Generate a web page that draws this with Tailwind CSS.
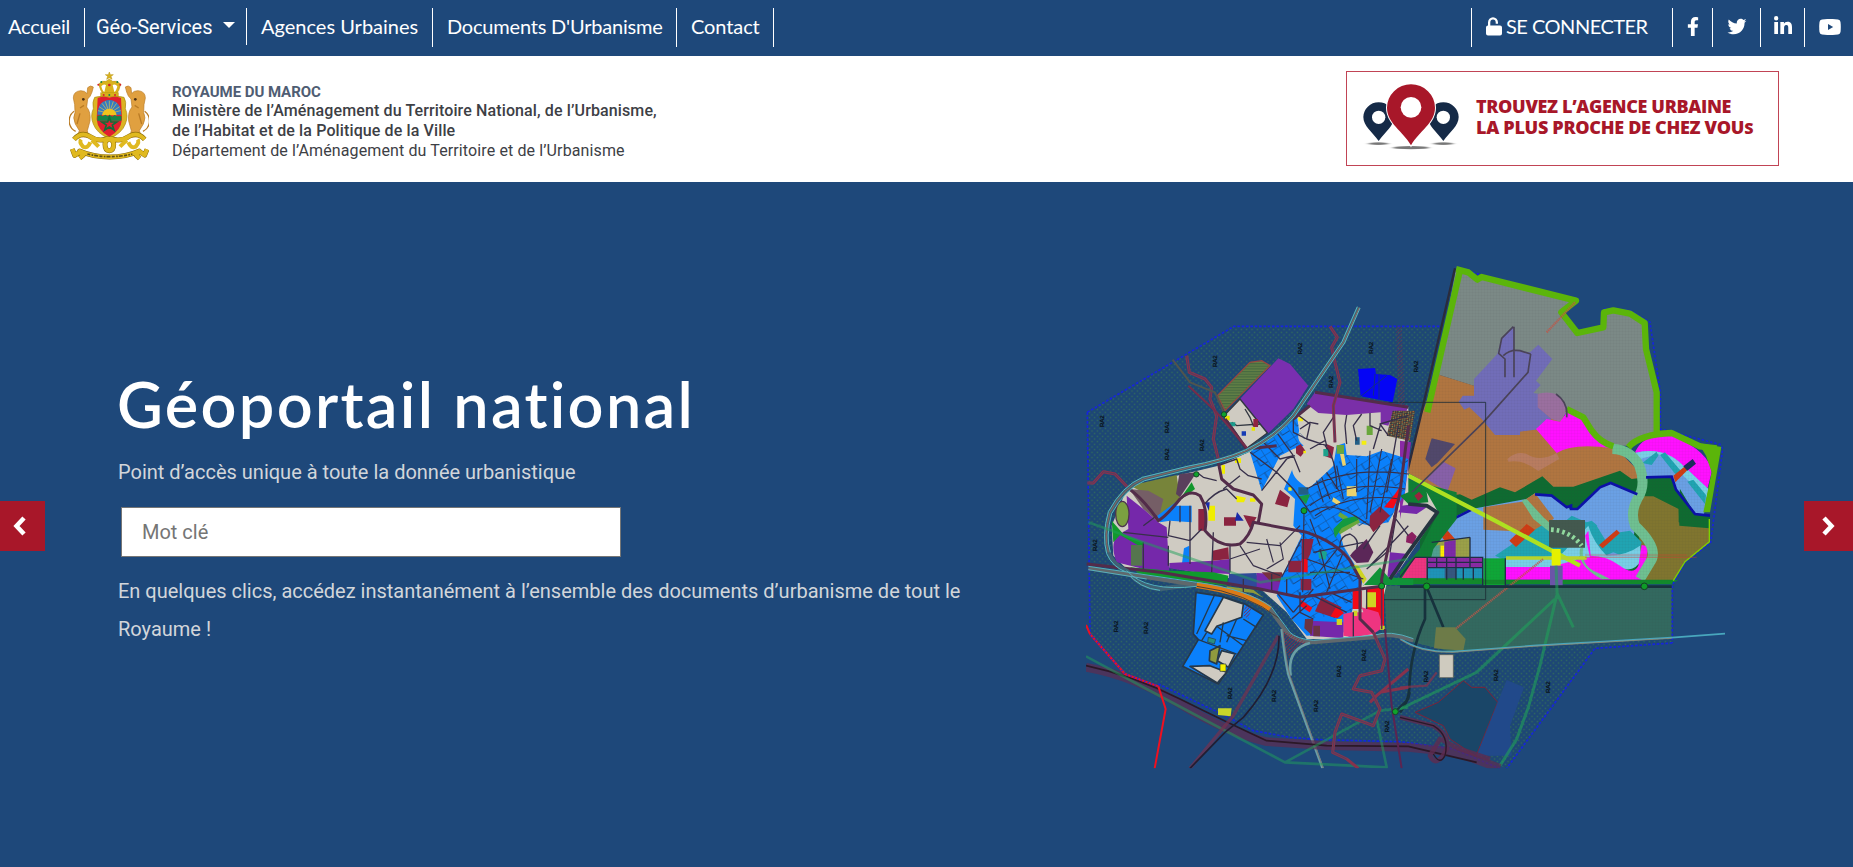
<!DOCTYPE html>
<html lang="fr">
<head>
<meta charset="utf-8">
<title>Géoportail national</title>
<script src="https://cdn.jsdelivr.net/npm/@tailwindcss/browser@4"></script>
</head>
<body class="w-[1853px] h-[867px] overflow-hidden bg-[#1e487a] font-['Roboto',sans-serif] flex flex-col">
<nav class="h-14 shrink-0 flex items-start justify-between pt-2 text-white text-[20px] font-['Lato',sans-serif] whitespace-nowrap">
  <div class="flex">
    <a class="w-[85px] h-[39px] pl-2 pt-1 leading-[29px] tracking-[-0.2px] border-r border-white">Accueil</a>
    <a class="w-[162px] h-[37px] pl-[11px] pt-1 leading-[30px] border-r border-white font-['Roboto',sans-serif] flex">Géo-Services<span class="ml-[10px] mt-[10px] w-0 h-0 border-x-[6px] border-x-transparent border-t-[6px] border-t-white"></span></a>
    <a class="w-[186px] h-[39px] pl-[14px] pt-1 leading-[29px] border-r border-white">Agences Urbaines</a>
    <a class="w-[244px] h-[39px] pl-[14px] pt-1 leading-[29px] tracking-[-0.2px] border-r border-white">Documents D'Urbanisme</a>
    <a class="w-[97px] h-[39px] pl-[14px] pt-1 leading-[29px] tracking-[-0.1px] border-r border-white">Contact</a>
  </div>
  <div class="flex">
    <a class="w-[202px] h-[39px] pl-[14px] border-x border-white flex items-start">
      <svg class="w-4 h-[19px] mt-[9px]" viewBox="0 0 16 19" fill="#fff"><path d="M2 8.500V5.500a5 5.300 0 0 1 10 0v1.300h-2.300V5.500a2.700 2.900 0 0 0-5.400 0v3h9.700a2 2 0 0 1 2 2v6a2 2 0 0 1-2 2H2a2 2 0 0 1-2-2v-6a2 2 0 0 1 2-2z"/></svg>
      <span class="ml-1 pt-1 leading-[29px] tracking-[-0.5px]">SE CONNECTER</span></a>
    <a class="w-10 h-[39px] border-r border-white pl-[14px] pt-[9px]"><svg class="w-3 h-[19px]" viewBox="0 0 320 512" fill="#fff" preserveAspectRatio="none"><path d="M279 288l14-93h-89v-60c0-25 12-50 52-50h41V7S261 0 225 0c-73 0-121 44-121 125v70H23v93h81v224h100V288z"/></svg></a>
    <a class="w-12 h-[39px] border-r border-white pl-[14px] pt-[9px]"><svg class="w-5 h-[19px]" viewBox="0 0 512 512" fill="#fff"><path d="M459 152c.3 4.500.3 9 .3 13.600 0 138.700-105.600 298.600-298.600 298.600-59.500 0-114.700-17.200-161.100-47.100 8.400 1 16.600 1.300 25.300 1.300 49.100 0 94.200-16.600 130.300-44.800-46.100-1-84.800-31.200-98.100-72.800 6.500 1 13 1.600 19.800 1.600 9.400 0 18.800-1.300 27.600-3.600-48.100-9.700-84.100-52-84.100-103v-1.300c14 7.800 30.200 12.700 47.400 13.300-28.300-18.800-46.800-51-46.800-87.400 0-19.500 5.200-37.400 14.300-53 51.700 63.700 129.300 105.300 216.400 109.800-1.600-7.800-2.600-15.900-2.600-24 0-57.800 46.800-104.900 104.900-104.900 30.200 0 57.500 12.700 76.700 33.100 23.700-4.500 46.500-13.300 66.600-25.300-7.800 24.400-24.400 44.800-46.100 57.800 21.100-2.300 41.600-8.100 60.400-16.200-14.300 20.800-32.200 39.300-52.600 54.300z"/></svg></a>
    <a class="w-11 h-[39px] border-r border-white pl-[13px] pt-[8px]"><svg class="w-[18px] h-[19px]" viewBox="0 0 448 470" fill="#fff"><path d="M100 448H7V149h93zM54 108A54 54 0 1 1 54 0a54 54 0 0 1 0 108zM448 448h-93V302c0-35-1-79-48-79-49 0-56 38-56 77v148h-93V149h89v41h1c13-24 43-48 88-48 94 0 112 62 112 142z"/></svg></a>
    <a class="w-12 h-[39px] pl-[14px] pt-[11px]"><svg class="w-[22px] h-[16px]" viewBox="0 0 22 16"><path fill="#fff" d="M3 .4Q11-.5 19 .4q2.200.4 2.500 2.600.6 5 0 10-.3 2.200-2.500 2.600-8 .9-16 0Q.8 15.200.5 13-.1 8 .5 3 .8.8 3 .4z"/><path fill="#1e487a" d="M9 5l5.200 3L9 11z"/></svg></a>
  </div>
</nav>

<header class="h-[126px] shrink-0 bg-white flex items-start justify-between pl-[69px] pr-[74px]">
  <div class="flex">
    <svg class="w-[80px] h-[92px] mt-[15px]" viewBox="27 33 240 276">
      <g fill="#d9b21c" stroke="#b8930f" stroke-width="1.500">
        <path d="M148 36l3 8h9l-7 5 3 9-8-5-8 5 3-9-7-5h9z"/>
        <path d="M116 72q5 22 15 31h37q10-9 14-31-12-12-24-8l-10-7-10 7q-12-4-22 8z"/>
        <path d="M122 98h53v13h-53z"/>
      </g>
      <path d="M124 79q6-8 14-4l-5 21q-6-3-9-17zm48 0q-6-8-14-4l5 21q6-3 9-17z" fill="#fff"/>
      <g fill="#d3222c"><circle cx="148" cy="75" r="4"/><circle cx="115" cy="74" r="3"/><circle cx="181" cy="74" r="3"/><circle cx="131" cy="105" r="3"/><circle cx="165" cy="105" r="3"/></g>
      <g fill="#168548"><circle cx="148" cy="105" r="3"/><circle cx="124" cy="66" r="3"/><circle cx="172" cy="66" r="3"/></g>
      <g fill="#e0a040" stroke="#b97b25" stroke-width="2">
        <path d="M40 114q0-20 22-22 14 0 19 9l2-18q8-9 17-2l-4 15q-4 14-13 21l-3 24q13 15 10 42l-8 29 5 20-36-2 7-18-12-20q-9-20-1-34l-1-24z"/>
        <path d="M42 154q-17 13-14 35 3 17 19 25M60 160l-9 32M72 136l-12 8" fill="none" stroke-width="4"/>
        <circle cx="70" cy="118" r="4" fill="#4b3014" stroke="none"/>
      </g>
      <g transform="translate(296 0) scale(-1 1)" fill="#e0a040" stroke="#b97b25" stroke-width="2">
        <path d="M40 114q0-20 22-22 14 0 19 9l2-18q8-9 17-2l-4 15q-4 14-13 21l-3 24q13 15 10 42l-8 29 5 20-36-2 7-18-12-20q-9-20-1-34l-1-24z"/>
        <path d="M42 154q-17 13-14 35 3 17 19 25M60 160l-9 32M72 136l-12 8" fill="none" stroke-width="4"/>
        <circle cx="70" cy="118" r="4" fill="#4b3014" stroke="none"/>
      </g>
      <path d="M104 112q20-6 44 0 24-6 44 0 8 14 4 34 10 22 0 46-10 28-48 44-38-16-48-44-10-24 0-46-4-20 4-34z" fill="#dcb422" stroke="#a8860f" stroke-width="2"/>
      <path d="M113 114q18-7 35-1 17-6 35 1l3 64q-3 34-38 53-35-19-38-53z" fill="#e01f30"/>
      <path d="M112 164q2-42 36-44 34 2 36 44z" fill="#347cc0"/>
      <path d="M148 160V122M148 160l-12-36M148 160l12-36M148 160l-22-30M148 160l22-30M148 160l-31-20M148 160l31-20M148 160l-34-8M148 160l34-8" stroke="#e7c54d" stroke-width="2"/>
      <path d="M126 166q4-20 22-20t22 20z" fill="#f0c31c"/>
      <path d="M112 168l10-3 6 4 8-5 7 5 6-4 8 5 7-5 7 4 13-1v14h-72z" fill="#168548"/>
      <path d="M148 171l5 15h17l-13 9 5 15-14-9-14 9 5-15-13-9h17z" fill="none" stroke="#126e38" stroke-width="5"/>
      <g fill="none" stroke="#8f6f0c" stroke-width="15" stroke-linejoin="round">
        <path d="M42 238q21-23 45-10 27 19 56 8 18 2 18 16 0 20-13 20t-13-20q0-14 18-16 29 11 56-8 24-13 45 10"/>
        <path d="M37 267l7 19 20-12M59 294l10-8-10-13q40 18 90 18t89-18l-9 13 10 9M236 273l18 12 7-17"/>
      </g>
      <g fill="none" stroke="#e0b91f" stroke-width="12" stroke-linejoin="round">
        <path d="M42 238q21-23 45-10 27 19 56 8 18 2 18 16 0 20-13 20t-13-20q0-14 18-16 29 11 56-8 24-13 45 10"/>
        <path d="M37 267l7 19 20-12M59 294l10-8-10-13q40 18 90 18t89-18l-9 13 10 9M236 273l18 12 7-17"/>
        <path d="M63 238q-6 8 6 22 14 7 22-13M233 238q6 8-6 22-14 7-22-13M96 240l20 20M200 240l-20 20"/>
      </g>
      <path d="M82 282q66 16 135 0" fill="none" stroke="#5f5016" stroke-width="5" stroke-dasharray="9 4 5 3 12 4"/>
    </svg>
    <div class="ml-[23px] mt-[27px] text-[16px] leading-5 text-[#3d4045] whitespace-nowrap tracking-[0.12px]">
      <p class="text-[15px] leading-[18px] font-bold text-[#4f5d73] tracking-[-0.05px]">ROYAUME DU MAROC</p>
      <p class="font-medium">Ministère de l’Aménagement du Territoire National, de l’Urbanisme,</p>
      <p class="font-medium">de l’Habitat et de la Politique de la Ville</p>
      <p>Département de l’Aménagement du Territoire et de l’Urbanisme</p>
    </div>
  </div>
  <div class="mt-[15px] w-[433px] h-[95px] border border-[#c14455] flex">
    <svg class="w-[96px] h-[68px] ml-[16px] mt-[12px]" viewBox="100 252 288 204">
      <defs><filter id="soft" x="-20%" y="-100%" width="140%" height="300%"><feGaussianBlur stdDeviation="7 2"/></filter></defs>
      <g fill="#777" filter="url(#soft)"><ellipse cx="146" cy="431" rx="30" ry="4"/><ellipse cx="341" cy="431" rx="30" ry="4"/><ellipse cx="244" cy="443" rx="53" ry="5"/></g>
      <path d="M147 423C128 396 101 378 101 351a46 44 0 0 1 92 0C193 378 166 396 147 423zM341 423C322 396 295 378 295 351a46 44 0 0 1 92 0C387 378 360 396 341 423z" fill="#152a47"/>
      <circle cx="147" cy="352" r="20" fill="#fff"/><circle cx="341" cy="352" r="20" fill="#fff"/>
      <path d="M244 436C220 393 172 370 172 323a72 70 0 0 1 144 0C316 370 268 393 244 436z" fill="#a81729" stroke="#fff" stroke-width="6" paint-order="stroke"/>
      <circle cx="244" cy="322" r="31" fill="#fff"/>
    </svg>
    <p class="ml-[17px] mt-[24px] font-['Open_Sans',sans-serif] font-extrabold text-[18px] leading-[21px] text-[#a81729] whitespace-nowrap"><span class="block tracking-[-0.35px]">TROUVEZ L’AGENCE URBAINE</span><span class="block tracking-[-0.3px]">LA PLUS PROCHE DE CHEZ VOU<span class="text-[16px]">S</span></span></p>
  </div>
</header>

<main class="flex-1 flex items-start">
  <button class="w-[45px] h-[50px] mt-[319px] bg-[#a81729] flex items-center justify-center pr-[6px]"><svg class="w-[13px] h-5" viewBox="0 0 13 20"><path d="M11 2L3.500 10 11 18" fill="none" stroke="#fff" stroke-width="4.500"/></svg></button>
  <section class="ml-[73px] mt-[182px] w-[962px] text-[20px] text-[#d2d6da]">
    <h1 class="ml-[-1px] text-white font-['Lato',sans-serif] font-semibold text-[63px] leading-[80px] tracking-[2.3px] whitespace-nowrap">Géoportail national</h1>
    <p class="mt-[9px] leading-[38px]">Point d’accès unique à toute la donnée urbanistique</p>
    <input class="block ml-[3px] mt-[16px] w-[500px] h-[50px] bg-white border border-[#767676] px-5 text-[20px] placeholder:text-[#757575]" placeholder="Mot clé">
    <p class="mt-[15px] w-[860px] leading-[38px]">En quelques clics, accédez instantanément à l’ensemble des documents d’urbanisme de tout le Royaume !</p>
  </section>
  <svg class="w-[660px] h-[520px] mt-[77px] shrink-0" viewBox="0 0 1980 1560" font-family="Liberation Sans, sans-serif">
    <defs>
      <pattern id="dots" width="16" height="16" patternUnits="userSpaceOnUse"><rect width="16" height="16" fill="#1d4775"/><rect x="2" y="2" width="4" height="4" fill="#33705a"/><rect x="10" y="10" width="4" height="4" fill="#33705a"/></pattern>
      <pattern id="grid" width="9" height="9" patternUnits="userSpaceOnUse"><path d="M0 0H9M0 0V9" stroke="#333" stroke-opacity=".14" stroke-width="1.500"/></pattern>
      <pattern id="lines" width="8" height="8" patternUnits="userSpaceOnUse"><path d="M0 2H8" stroke="#2f5a3c" stroke-width="2"/></pattern>
      <pattern id="hatch" width="7" height="7" patternUnits="userSpaceOnUse" patternTransform="rotate(45)"><path d="M0 0V7" stroke="#8f2240" stroke-width="4"/></pattern>
      <pattern id="blocks" width="52" height="44" patternUnits="userSpaceOnUse" patternTransform="rotate(-32)"><path d="M0 0H52M0 0V44M26 22H52M26 0V22" stroke="#17457e" stroke-width="2.500" fill="none"/></pattern>
      <pattern id="tiny" width="14" height="12" patternUnits="userSpaceOnUse" patternTransform="rotate(8)"><rect width="14" height="12" fill="#34303a"/><path d="M1 2h5M8 7h4" stroke="#d97a2c" stroke-width="3"/><path d="M2 8h4M9 2h3" stroke="#9fc46c" stroke-width="3"/></pattern>
      <clipPath id="frame"><path d="M18 0H1940V1528H18z"/></clipPath>
    </defs>
    <g clip-path="url(#frame)">
    <!-- zone agricole RA2 -->
    <path d="M22 460L462 202H1085L1040 430 960 960V1140H1777V1152L1545 1168 1280 1528 1120 1470 960 1448 720 1442 630 1435 520 1415 440 1372 235 1275 135 1245 30 1125z" fill="url(#dots)"/>
    <path d="M22 460L462 202H1085M22 460L30 1125M235 1275L440 1372 520 1415 630 1435 720 1442 960 1448 1120 1470 1258 1528M1777 1152L1545 1168 1280 1528" fill="none" stroke="#1624dd" stroke-width="5" stroke-dasharray="8 5"/>

    <!-- secteur est -->
    <g transform="translate(960 0)">
      <path d="M168 28L205 35 230 60 245 50 530 122 480 170 530 225 612 205 610 160 640 150 690 160 738 190 740 270 770 400 770 515 690 560 620 560 500 460 220 380 110 345z" fill="#7b8986"/>
      <path d="M110 345L222 380 420 430 640 560 720 640 700 780 380 800 250 790 170 720 20 640 60 480z" fill="#b07540"/>
      <path d="M340 203V275L390 280 415 257 457 300 408 365 422 378 400 402 418 405 415 445 455 480 420 510 360 518V528H285L245 480 208 445 193 452 176 428 188 410H222V360L292 285 305 238z" fill="#716db8"/>
      <path d="M413 445V405Q440 396 468 405 500 425 500 460L480 488 455 480z" fill="#9a6f9f"/>
      <path d="M408 510L440 480 480 488 502 458 550 480 590 530 640 568Q520 550 470 582z" fill="#ff10ff"/>
      <path d="M95 538L165 555 112 612 95 625 76 600z" fill="#51486b"/><path d="M130 608L167 628 142 698 80 660z" fill="#8760a8"/>
      <path d="M322 600Q350 575 380 585 420 610 470 582L478 600 415 636Q370 600 325 608z" fill="#b87c60"/>
      <path d="M60 690L110 760 150 710 180 706 215 722 300 685 345 700 427 652 460 683H520L660 635 695 660 740 655 820 650 890 770 800 800V960H60z" fill="#0f6b31"/>
      <path d="M705 580Q730 520 820 530 930 580 935 640L922 690 800 610 740 600z" fill="#ff10ff"/>
      <path d="M705 582Q790 560 850 620L925 690 912 765H885L825 690 815 655H738z" fill="#6aa0e4"/>
      <path d="M705 582Q790 560 850 620L925 690 920 715 860 660 830 630 775 585 720 600z" fill="#78cfe6"/>
      <path d="M727 612L770 578 775 590 755 618zM780 588L795 580 842 635 830 650zM862 668L880 662 918 708 915 735z" fill="#20a4b2"/>
      <path d="M820 650L855 622 862 634 826 670z" fill="#cf3c14"/><path d="M850 622L878 600 888 614 862 635z" fill="#1c2c5c"/>
      <!-- lagune -->
      <path d="M100 870L150 780 215 750 380 720 405 703 455 710 510 750 530 750 600 685 632 672 710 705 700 860 660 960H100z" fill="#6aa0e4"/>
      <path d="M250 745L365 728 405 703 462 778 420 820 250 812z" fill="#b07540"/>
      <path d="M706 712L760 712 836 750V790L930 800 930 850 855 910 815 970H730z" fill="#80752f"/>
      <path d="M836 745L840 690 885 765 930 770 928 808 838 800z" fill="#0f6b31"/>
      <path d="M285 890L360 840 440 790 480 800 515 770 560 790 575 785 640 840 660 820 690 815 725 850 720 870 690 900 640 880 520 930 360 925z" fill="#20a4b2"/>
      <path d="M590 800L615 790 640 830 620 850z" fill="#6aa0e4"/>
      <path d="M565 800Q580 850 620 890 680 890 720 860L725 900Q700 950 650 920L540 890 500 930H318V900L480 890z" fill="#78cfe6"/>
      <path d="M318 962V924H450L540 900 570 895 555 830 565 815 572 890Q620 890 660 920 700 950 715 920L725 858 745 862 730 962z" fill="#ff10ff"/>
      <path d="M365 725L380 720 430 775 470 810 450 820 400 780zM545 865H550Q540 920 590 940L630 960H605Q530 920 540 870z" fill="#6fc091"/>
      <path d="M637 570Q690 570 718 620 740 680 712 720 690 760 705 800 780 870 750 910L720 960" fill="none" stroke="#6fc091" stroke-width="30"/>
      <path d="M110 810L130 800 165 840 140 855zM328 845L380 795 405 812 348 864zM597 858L650 812 660 822 608 868z" fill="#cf3c14"/>
      <path d="M447 783H555V866H447z" fill="#43594f"/><path d="M453 812Q510 815 545 860" fill="none" stroke="#92dca0" stroke-width="14" stroke-dasharray="8 9"/>
      <path d="M405 706L455 710 500 745 513 740V750H532L600 685 632 672 712 706M738 655L815 653 828 692 885 765 930 770M92 860L150 785 215 752" fill="none" stroke="#0b10a8" stroke-width="8"/>
      <path d="M95 850L210 835V895H82z" fill="#9aa048"/><path d="M133 848L167 843V922H133z" fill="#7d2aa8"/><path d="M122 860h10v34h-10z" fill="#ffee00"/><path d="M95 862l24-4v36H85z" fill="#4fa090"/>
      <path d="M170 700L20 660 0 730 90 740 110 770 60 870 0 940 0 975 75 970 100 870 170 780z" fill="#0f7f35"/>
      <path d="M45 895H80V958H5z" fill="#ee3480"/><path d="M82 896H248V926H82z" fill="#8b2aa5"/><path d="M82 926H248V962H82z" fill="#1e93b8"/><path d="M134 928H168V963H134z" fill="#35577f"/><path d="M250 898H316V978H250z" fill="#0ea637"/>
      <path d="M0 958H250V962H835L815 976H0z" fill="#12892b"/>
      <path d="M45 895H248V980M82 895V962M82 910H248M82 926H248M110 895V926M140 895V962M168 895V962M210 835V926M190 926V962M220 926V962M316 898V980M0 955L45 895M95 850L210 835" fill="none" stroke="#202e46" stroke-width="4"/>
      <path d="M-48 980H815V1135L600 1145 400 1160 160 1180 0 1140-40 1122z" fill="#33695f"/>
      <path d="M168 28L205 35 230 60 245 50 530 122 480 170 530 225 612 205 610 160 640 150 690 160 738 190 740 270 770 400 770 515 815 515 900 555 960 565 930 770V850L855 910 815 970H0V640z" fill="url(#grid)"/>
      <path d="M-48 980H815V1135L160 1180-40 1122z" fill="url(#grid)"/>
      <path d="M168 28L530 120M612 150L690 155 750 190 781 400V510L960 556 968 570 932 850 855 910 817 978V1152" fill="none" stroke="#1624dd" stroke-width="5" stroke-dasharray="7 6"/>
      <path d="M82 460L180 34M168 30L205 40 232 62 245 54 528 125 484 160 532 222 610 205 612 160 640 154 690 164 734 192 738 270 770 400V522M500 450L550 475 575 515Q600 550 640 562M685 565Q720 525 815 522L900 562 950 568" fill="none" stroke="#5bb50a" stroke-width="19" stroke-linejoin="round"/>
      <path d="M895 552L964 564 930 760H910L935 640 918 590z" fill="#5bb50a"/>
      <path d="M928 780V848L855 908 820 965" fill="none" stroke="#7ed000" stroke-width="4"/>
      <path d="M25 650L285 785 540 920" fill="none" stroke="#aee021" stroke-width="13"/><path d="M318 897H560" stroke="#b9d32b" stroke-width="10"/><path d="M455 870H482V920H455z" fill="#e5f000"/><path d="M450 920H488V980H450z" fill="#6b55a8"/>
      <path d="M440 220L525 130M135 1135L430 900" fill="none" stroke="#c25546" stroke-width="7" stroke-dasharray="4 2" opacity=".8"/>
      <path d="M555 895H890M555 888H860" stroke="#ce3b30" stroke-width="2" opacity=".7"/>
      <path d="M165 28L60 480 0 730" fill="none" stroke="#2a2b3c" stroke-width="7"/>
      <path d="M392 285L384 340 250 490 0 735M315 355V300L296 283 305 238 340 203M342 203V355M310 290Q330 270 360 275L392 285M500 475Q505 430 468 405" fill="none" stroke="#4a4358" stroke-width="5" stroke-linejoin="round"/>
      <path d="M0 983H815M80 985L130 1105M75 985V1080Q30 1180 28 1290 25 1330 0 1360" fill="none" stroke="#17323d" stroke-width="8"/>
      <circle cx="80" cy="982" r="10" fill="#0e9c27" stroke="#143f25" stroke-width="3"/><circle cx="733" cy="982" r="10" fill="#0e9c27" stroke="#143f25" stroke-width="3"/>
      <path d="M-91 430H257V1022H-91z" fill="none" stroke="#1c2d35" stroke-width="2.500"/>
      <path d="M108 1105H165L197 1140 190 1175 102 1168z" fill="#6d7b48"/><path d="M118 1187H160V1256H118z" fill="#cfcbbf" stroke="#5a5a50" stroke-width="2"/>
      <path d="M45 1360L115 1330 190 1265 215 1285 255 1285 293 1330 228 1492 150 1440 130 1400z" fill="#1a4668" stroke="#7d2338" stroke-width="3"/>
      <path d="M320 1263L372 1285 330 1400 335 1490H230L293 1330z" fill="#21498a"/>
      <path d="M0 1350L230 1240 465 1020M470 1000L520 1105M470 1010L420 1220 385 1345 350 1440 300 1520M468 920L472 1020" fill="none" stroke="#20a05a" stroke-width="9" opacity=".6"/>
      <path d="M0 1138Q60 1180 160 1178L400 1160 815 1136 975 1124" fill="none" stroke="#48a7bd" stroke-width="5"/><path d="M0 1142Q60 1183 160 1180L400 1162 815 1138" fill="none" stroke="#a68a68" stroke-width="2"/>
    </g>

    <!-- secteur nord -->
    <path d="M412 410L510 310 545 305 570 320 435 455z" fill="#627f45"/><path d="M412 410L510 310 545 305 570 320 435 455z" fill="url(#lines)" stroke="#96473f" stroke-width="4"/>
    <path d="M480 420L595 298 630 315 685 380 640 450 565 523z" fill="#7a2fb0"/>
    <path d="M480 420L562 522 500 568 432 470z" fill="#cfcbc2" stroke="#333842" stroke-width="4"/>
    <path d="M495 450L510 475 520 500 540 495 470 500 455 490" fill="none" stroke="#333842" stroke-width="4"/><path d="M485 517h13v13h-13z" fill="#163bb5"/><path d="M520 480h14v24h-14z" fill="#8f2440"/><path d="M435 470h14v14h-14zM515 505h10v10h-10z" fill="#e9e600"/><path d="M450 490h16v12h-16z" fill="#1c9b8c"/>
    <path d="M834 330L885 327 888 345 930 348 952 360 938 430 842 412z" fill="#0505f5"/><path d="M885 345L880 410M897 345V420M842 412L920 350" stroke="#112e88" stroke-width="3"/>
    <path d="M948 202H965L975 440H955z" fill="url(#hatch)" opacity=".6"/>

    <!-- agglomération -->
    <path d="M415 620L505 580 640 480 690 440 705 400 985 445 985 750 1040 700 1075 760 960 930 920 975 880 1140 680 1140 620 1060 520 970 265 925 140 930 100 890 95 800 140 690 290 650z" fill="#cfcbc2"/>
    <path d="M680 435L705 400 985 440 975 470 938 465 925 500 902 495V460L800 468 715 462z" fill="#7a2fa8"/>
    <path d="M938 455H1005L990 545 920 530z" fill="url(#tiny)"/><path d="M993 550L960 545 960 780 975 700z" fill="#8a2aa5"/>
    <path d="M510 580L650 465 658 520 680 540 670 560 640 570 600 590 545 695z" fill="#0a80fb"/>
    <path d="M150 680L290 648 300 720 240 770 230 735 190 700z" fill="#77843a"/><path d="M148 690L205 695 250 720 245 740 235 790 190 750z" fill="#755e66"/>
    <path d="M298 645L350 640 300 715 288 705z" fill="#5a3f5c"/><path d="M300 720L335 670 345 690 305 720z" fill="#11962b"/>
    <path d="M140 710L190 750 235 790 260 805 268 935 190 930 110 910Q90 860 110 830L145 810z" fill="#7528aa"/>
    <path d="M95 785L130 825 190 850 190 868 120 828 100 850z" fill="#119a2c"/><ellipse cx="127" cy="765" rx="20" ry="38" fill="#7ba040" stroke="#4d3550" stroke-width="4"/>
    <path d="M153 858H187V920H153z" fill="#55754e"/>
    <path d="M280 740H335V790L270 785 240 790 232 770 300 720z" fill="#0a80fb"/><path d="M312 868L328 860V920H305z" fill="#0a80fb"/>
    <path d="M268 912L400 905 450 900V945L350 940 268 928z" fill="#7528aa"/><path d="M150 925L270 935 400 940 445 950 440 980 350 968 180 945z" fill="#0f9a2c"/>
    <path d="M398 875L445 865 447 900 398 905zM432 775H468V800H432zM355 750H378V815H355zM490 768L530 775 510 808z" fill="#8b2440"/>
    <path d="M425 618h10v26h-10zM465 598h18v14h-18zM468 710l30 6-6 14h-22zM385 740h20v45h-20zM510 718h16v10h-16z" fill="#f0ee00"/><path d="M375 730l14 0-2 26zM465 785l6-26 20 26z" fill="#1a2caa"/>
    <path d="M447 945L530 942 535 985 445 975z" fill="#2f4a9a"/><path d="M530 942L595 945 610 965 662 975 660 1010 590 1000 530 985z" fill="#7528aa"/><path d="M545 940h60l15 30-50-5z" fill="#77303f"/>
    <path d="M650 600L740 640 760 620 770 560 795 552 800 588 860 592 905 575 985 600 975 700 925 790 870 800 825 790 780 820 790 860 850 960 840 990 660 1010 605 955 665 830 640 800 645 720 612 690z" fill="#0a80fb"/>
    <path d="M645 590Q620 640 662 672L685 690 740 640 755 600 740 560 690 545z" fill="#cfcbc2"/>
    <path d="M660 510Q640 550 690 570 745 560 735 530L720 480 680 495z" fill="#cfcbc2"/>
    <path d="M605 950L640 965 840 985 815 1060 815 1140 790 1120 680 1130 635 1080 590 1010z" fill="#0a80fb"/>
    <g fill="url(#blocks)"><path d="M510 580L650 465 658 520 680 540 600 590 545 695zM685 690L740 640 800 588 860 592 905 575 985 600 975 700 925 790 870 800 780 820 790 860 850 960 815 1060 680 1080 605 955 665 830z"/></g>
    <g fill="#8b2440"><path d="M600 692L630 715 622 745 585 735zM870 770L900 742 930 770 880 820 868 800zM648 563l14-8 14 20-14 18-14-10zM740 555l22 10-6 34-22-8zM665 840h36l-10 45-26 50zM625 905h38v35h-38zM662 960h32v34h-32zM725 1015l60 30-20 32-60-20z"/></g>
    <g fill="#f20a18"><path d="M965 675L945 705 912 745 940 748 960 705zM665 900h18v40h-18zM818 995h27v55h-27zM860 985h52v120l-55-50zM770 1040l22 22-20 16-20-6zM662 1022l35 24-8 14-30-20z"/></g>
    <path d="M818 880L860 840 880 880 865 910 830 912 810 890z" fill="#5b2758"/>
    <path d="M690 1085L790 1090V1138L690 1130z" fill="#7528aa"/><path d="M790 1065L815 1060H850L845 1045 895 1060 910 1105 880 1125 820 1135 790 1130z" fill="#ee3480"/>
    <path d="M675 1080l25 0-5 48-22-20zM700 1100h20v32h-20z" fill="#6a3344"/>
    <path d="M860 1000h28v45h-28zM815 915l20 5 25 40-10 14zM770 1080h16v18h-16zM820 1055h12v16h-12zM900 1100h14v12h-14z" fill="#cfd422"/>
    <g fill="#ead36f"><path d="M800 682h30v30h-30zM780 585l12 0 6 34-10 2zM760 715l22 14-8 10-18-12z"/></g>
    <g fill="#69a73c"><path d="M770 558h22v26h-22zM860 500h18v28h-18zM780 760l24 14-8 12-22-16zM830 770l10 20-60 36-8-12z"/></g>
    <path d="M655 685h30v22h-30zM825 535h14v22h-14z" fill="#235f86"/><path d="M655 712l35-6-12 30zM760 810l30-30 40-10 5 12-50 25-20 30z" fill="#149a40"/>
    <path d="M730 570h15v22h-15zM715 880l12-8 14 8-4 22-20-4z" fill="#1ca28c"/>
    <g fill="#f4ee10"><path d="M655 475h14v12h-14zM845 545h14v12h-14zM670 575h8v8h-8zM625 685h10v10h-10z"/></g>
    <path d="M440 982l80 10 30 24-30-14-80-8z" fill="#8f9a3a"/>
    <path d="M960 710L985 700 1040 700 1045 730 985 735z" fill="#0f7f35"/><path d="M1003 710l14-12 12 14-14 14z" fill="#9a2340"/>
    <path d="M965 740L1020 733 1040 745 1010 765 955 760zM930 880L985 885 950 945 922 955z" fill="#7528aa"/>
    <path d="M980 830l16-12 14 14-10 24-22-6z" fill="#8a1f60"/>
    <path d="M850 980L900 925 925 955 1000 960V978H850z" fill="#109338"/>

    <!-- voirie -->
    <g fill="none" stroke="#37304a" stroke-linejoin="round">
      <g stroke-width="4">
        <path d="M650 465L690 495 680 540 740 560 730 520 760 475M800 468L795 500 800 555M845 465L820 500 830 545M870 462V500L905 515M902 495L880 570M985 470L900 495 925 530M660 510L690 490 715 495M690 570L735 545M735 560Q770 600 770 690M510 580L590 640 640 690 690 760M590 520L640 590M550 550L600 600 640 590 660 640M640 480V520L680 540M545 695L620 600 645 590M350 640L370 655 410 665M415 620L470 600 480 630 505 650 545 660M430 690L480 650M370 740Q400 700 440 690L470 720M270 785L265 830 330 845 365 810M330 845V915M400 820L395 940M265 860V920M190 850V930M130 820L265 835M190 800L230 770M450 860V940M300 740V790M330 740V845"/>
        <path d="M680 690Q800 620 985 645M690 740Q790 660 975 690M705 770Q810 700 960 720M770 620L790 720M870 575L860 780M905 570L870 760M740 640L780 700M725 655L750 720M710 665L730 730M830 600V700M935 600L900 760M690 760Q750 720 840 780L870 800M690 780L720 860M672 760L668 1000M700 880L850 850M605 955L665 840M680 900L850 960M690 940L810 940M720 870L750 990M780 860L700 960M740 1000L790 880M480 860L520 920 600 950M500 850L600 860 660 800M560 840L580 910M450 900L540 870M600 850L610 900 560 930" stroke-width="3.500"/>
        <path d="M640 1060L700 990M660 1000V1060L700 1080M635 1080L680 1040M590 1000L640 1060M700 1010L800 1060M750 1000L815 1030M860 985V1050M820 1060V1135M955 500L920 700M870 920L985 800M940 770L985 830M920 880L860 930M900 800L850 870M985 880L930 960M950 760L930 880M490 960V1000M575 945V1000M620 960V1010"/>
      </g>
      <g stroke="#532c4a" stroke-width="9">
        <path d="M148 690Q190 720 235 785 260 770 300 720 330 690 360 710 385 750 375 815 420 870 480 855 510 830 520 790L680 820Q770 850 810 905L840 960 840 1080 880 1120"/>
        <path d="M415 610L425 660 460 690 520 708 545 735 535 790"/>
        <path d="M20 915L240 940 540 990 660 1015 840 990 905 982"/>
        <path d="M705 400L985 445M640 480L690 440M985 500L960 700 905 960 905 980"/>
        <path d="M590 560L500 570 435 480"/>
      </g>
      <path d="M985 735L1040 740 1072 760 985 880 930 960" stroke="#263440" stroke-width="11"/>
      <path d="M780 860Q780 830 810 825 840 840 830 870" stroke-width="4"/>
      <path d="M22 672H40L70 638 105 645 148 690M320 290L328 340 375 360 395 385 390 420 410 470 400 540 415 600M750 202L772 235 755 265 765 310 780 370 760 440 765 550" stroke="#8b2f4e" stroke-width="9"/>
      <path d="M22 672H40L70 638 105 645 148 690M320 290L328 340 375 360 395 385 390 420 410 470 400 540 415 600M750 202L772 235 755 265 765 310 780 370 760 440 765 550" stroke="#54405c" stroke-width="3"/>
      <path d="M278 302L330 370 405 400 435 470" stroke="#50544e" stroke-width="6"/><path d="M325 380L410 460 505 572" stroke="#762d4a" stroke-width="6"/>
      <!-- autoroute -->
      <path d="M836 145L790 250 640 470Q590 530 500 575 430 605 330 625L190 660Q130 685 90 760 70 830 85 880 100 920 140 935 180 985 240 990L350 975" stroke="#3f6274" stroke-width="13"/>
      <path d="M832 143L786 248 636 468Q586 528 496 573 426 603 326 621L187 655Q126 681 85 758 65 830 80 884 97 924 140 940 180 989 240 994M840 147L794 252 644 472Q594 532 504 579 434 609 334 630L194 665Q136 689 95 764 76 834 91 880" stroke="#54b7c3" stroke-width="3"/>
      <path d="M838 145L790 250 640 470Q590 530 500 575 430 605 330 625L190 660Q130 685 90 760 70 830 85 880" stroke="#8a675e" stroke-width="3"/>
      <path d="M25 928L350 978Q500 1000 570 1050L620 1120Q650 1150 700 1150L880 1135Q930 1118 1000 1145" stroke="#5f686c" stroke-width="12"/>
      <path d="M350 978Q500 1000 570 1050" stroke="#dc7a16" stroke-width="18"/><path d="M350 982Q500 1000 600 1080" stroke="#49413b" stroke-width="3"/>
      <path d="M25 922L350 970Q500 990 575 1045L630 1120Q650 1140 700 1144L880 1129Q930 1112 1000 1139M140 935Q200 1000 350 982M25 932L200 960" stroke="#55b0bd" stroke-width="3"/>
      <path d="M600 1110L630 1210Q620 1170 690 1155L640 1130z" fill="url(#hatch)" stroke="none"/>
      <path d="M605 1110Q620 1240 630 1260L728 1528M690 1152Q620 1170 632 1250" stroke="#6a9ea5" stroke-width="8"/><path d="M608 1110Q623 1240 634 1260L730 1528" stroke="#805d5c" stroke-width="2"/>
    </g>

    <!-- quartier sud-ouest -->
    <g transform="translate(0 750)" stroke="#26384a" stroke-width="5" stroke-linejoin="round">
      <path d="M348 250L425 262 495 285 550 318 415 525 308 472 355 392 340 375z" fill="#0a80fb"/>
      <path d="M430 265L490 285 485 325 410 352 395 375 375 365zM330 472L390 470 440 490 412 522zM425 425L465 435 445 475 412 455z" fill="#cfcbc2"/>
      <path d="M390 425L420 410 410 465 388 455z" fill="#8f9a3e"/><path d="M420 465h18v22h-18z" fill="#f4f000" stroke-width="2"/><path d="M385 385l22 6-4 14-20-6z" fill="#2c9080" stroke-width="2"/>
      <path d="M405 255L350 375M355 392L470 435M410 352L490 410M430 340L420 400M470 330L440 400M380 370L365 395M490 330L530 355M440 380L500 395" fill="none" stroke-width="4"/>
      <path d="M495 290L515 295 505 330 490 320z" fill="url(#hatch)" stroke="none"/>
      <path d="M414 598H455L452 622 414 618z" fill="#c9d62a" stroke="none"/>
    </g>

    <!-- infrastructures sud -->
    <g fill="none" stroke-linejoin="round">
      <path d="M18 1225Q160 1250 300 1335T560 1448L740 1460 985 1465 1130 1480 1260 1528" stroke="#5e2c50" stroke-width="26" opacity=".7"/>
      <path d="M18 1220Q160 1250 300 1320T560 1445L740 1460 985 1462 1190 1510" stroke="#2b1827" stroke-width="5"/>
      <path d="M960 1375L1060 1400Q1110 1430 1100 1470 1070 1530 1050 1490L1080 1440 1140 1470 1230 1500" stroke="#5e2c50" stroke-width="14" opacity=".8"/><path d="M960 1375L1060 1400Q1110 1430 1095 1490 1080 1520 1060 1485" stroke="#2b1827" stroke-width="4"/>
      <path d="M18 1192L200 1290 615 1510 900 1355 985 1345M615 1510L920 1525 890 1380M25 790L190 850 540 970 985 900" stroke="#20a05a" stroke-width="8" opacity=".5"/>
      <path d="M595 1130L460 1370 330 1528" stroke="#75304f" stroke-width="10" opacity=".7"/><path d="M597 1130Q600 1250 490 1375L435 1420 330 1528" stroke="#211d31" stroke-width="5"/>
      <path d="M18 1098L30 1125 135 1245 235 1282 257 1350 224 1528" stroke="#ef1020" stroke-width="6"/><path d="M30 1125L135 1245 235 1282" stroke="#2a20d8" stroke-width="4" stroke-dasharray="5 6"/>
      <path d="M880 1120L915 1200 905 1235 840 1250 820 1290 875 1300 900 1350 880 1400 785 1365 765 1420 758 1480 800 1500 835 1528M985 1230L890 1310 870 1330M985 1285L900 1300" stroke="#87324c" stroke-width="9"/>
      <path d="M880 1120L915 1200 905 1235 840 1250 820 1290 875 1300 900 1350 880 1400 785 1365 765 1420 758 1480 800 1500" stroke="#54405c" stroke-width="3"/>
      <path d="M915 1110L935 1340 965 1528" stroke="#5c2450" stroke-width="6"/><path d="M1070 1240L1040 1280 960 1285" stroke="#87324c" stroke-width="7" opacity=".7"/><path d="M990 1300L985 1320 945 1358" stroke="#17323d" stroke-width="6"/>
      <path d="M905 980V1110" stroke="#642850" stroke-width="5"/>
    </g>
    <g fill="#0fa32b" stroke="#17402a" stroke-width="3"><circle cx="432" cy="466" r="8"/><circle cx="349" cy="646" r="8"/><circle cx="672" cy="755" r="9"/><circle cx="905" cy="981" r="9"/><circle cx="946" cy="1358" r="9"/></g>
    <g fill="#0a141c" stroke="#0a141c" stroke-width=".8" font-size="18">
      <text transform="translate(73 504) rotate(-90)">RA2</text><text transform="translate(268 522) rotate(-90)">RA2</text><text transform="translate(268 603) rotate(-90)">RA2</text><text transform="translate(371 576) rotate(-90)">RA2</text><text transform="translate(412 324) rotate(-90)">RA2</text><text transform="translate(666 286) rotate(-90)">RA2</text><text transform="translate(760 386) rotate(-90)">RA2</text><text transform="translate(880 284) rotate(-90)">RA2</text><text transform="translate(1014 340) rotate(-90)">RA2</text>
      <text transform="translate(50 876) rotate(-90)">RA2</text><text transform="translate(113 1120) rotate(-90)">RA2</text><text transform="translate(205 1124) rotate(-90)">RA2</text><text transform="translate(456 1320) rotate(-90)">RA2</text><text transform="translate(589 1328) rotate(-90)">RA2</text><text transform="translate(714 1358) rotate(-90)">RA2</text><text transform="translate(782 1254) rotate(-90)">RA2</text><text transform="translate(857 1206) rotate(-90)">RA2</text><text transform="translate(926 1420) rotate(-90)">RA2</text><text transform="translate(1043 1270) rotate(-90)">RA2</text><text transform="translate(1253 1266) rotate(-90)">RA2</text><text transform="translate(1409 1302) rotate(-90)">RA2</text>
    </g>
    </g>
  </svg>
  <button class="ml-auto w-[49px] h-[50px] mt-[319px] bg-[#a81729] flex items-center justify-center"><svg class="w-[13px] h-5" viewBox="0 0 13 20"><path d="M2 2L9.500 10 2 18" fill="none" stroke="#fff" stroke-width="4.500"/></svg></button>
</main>
</body>
</html>
